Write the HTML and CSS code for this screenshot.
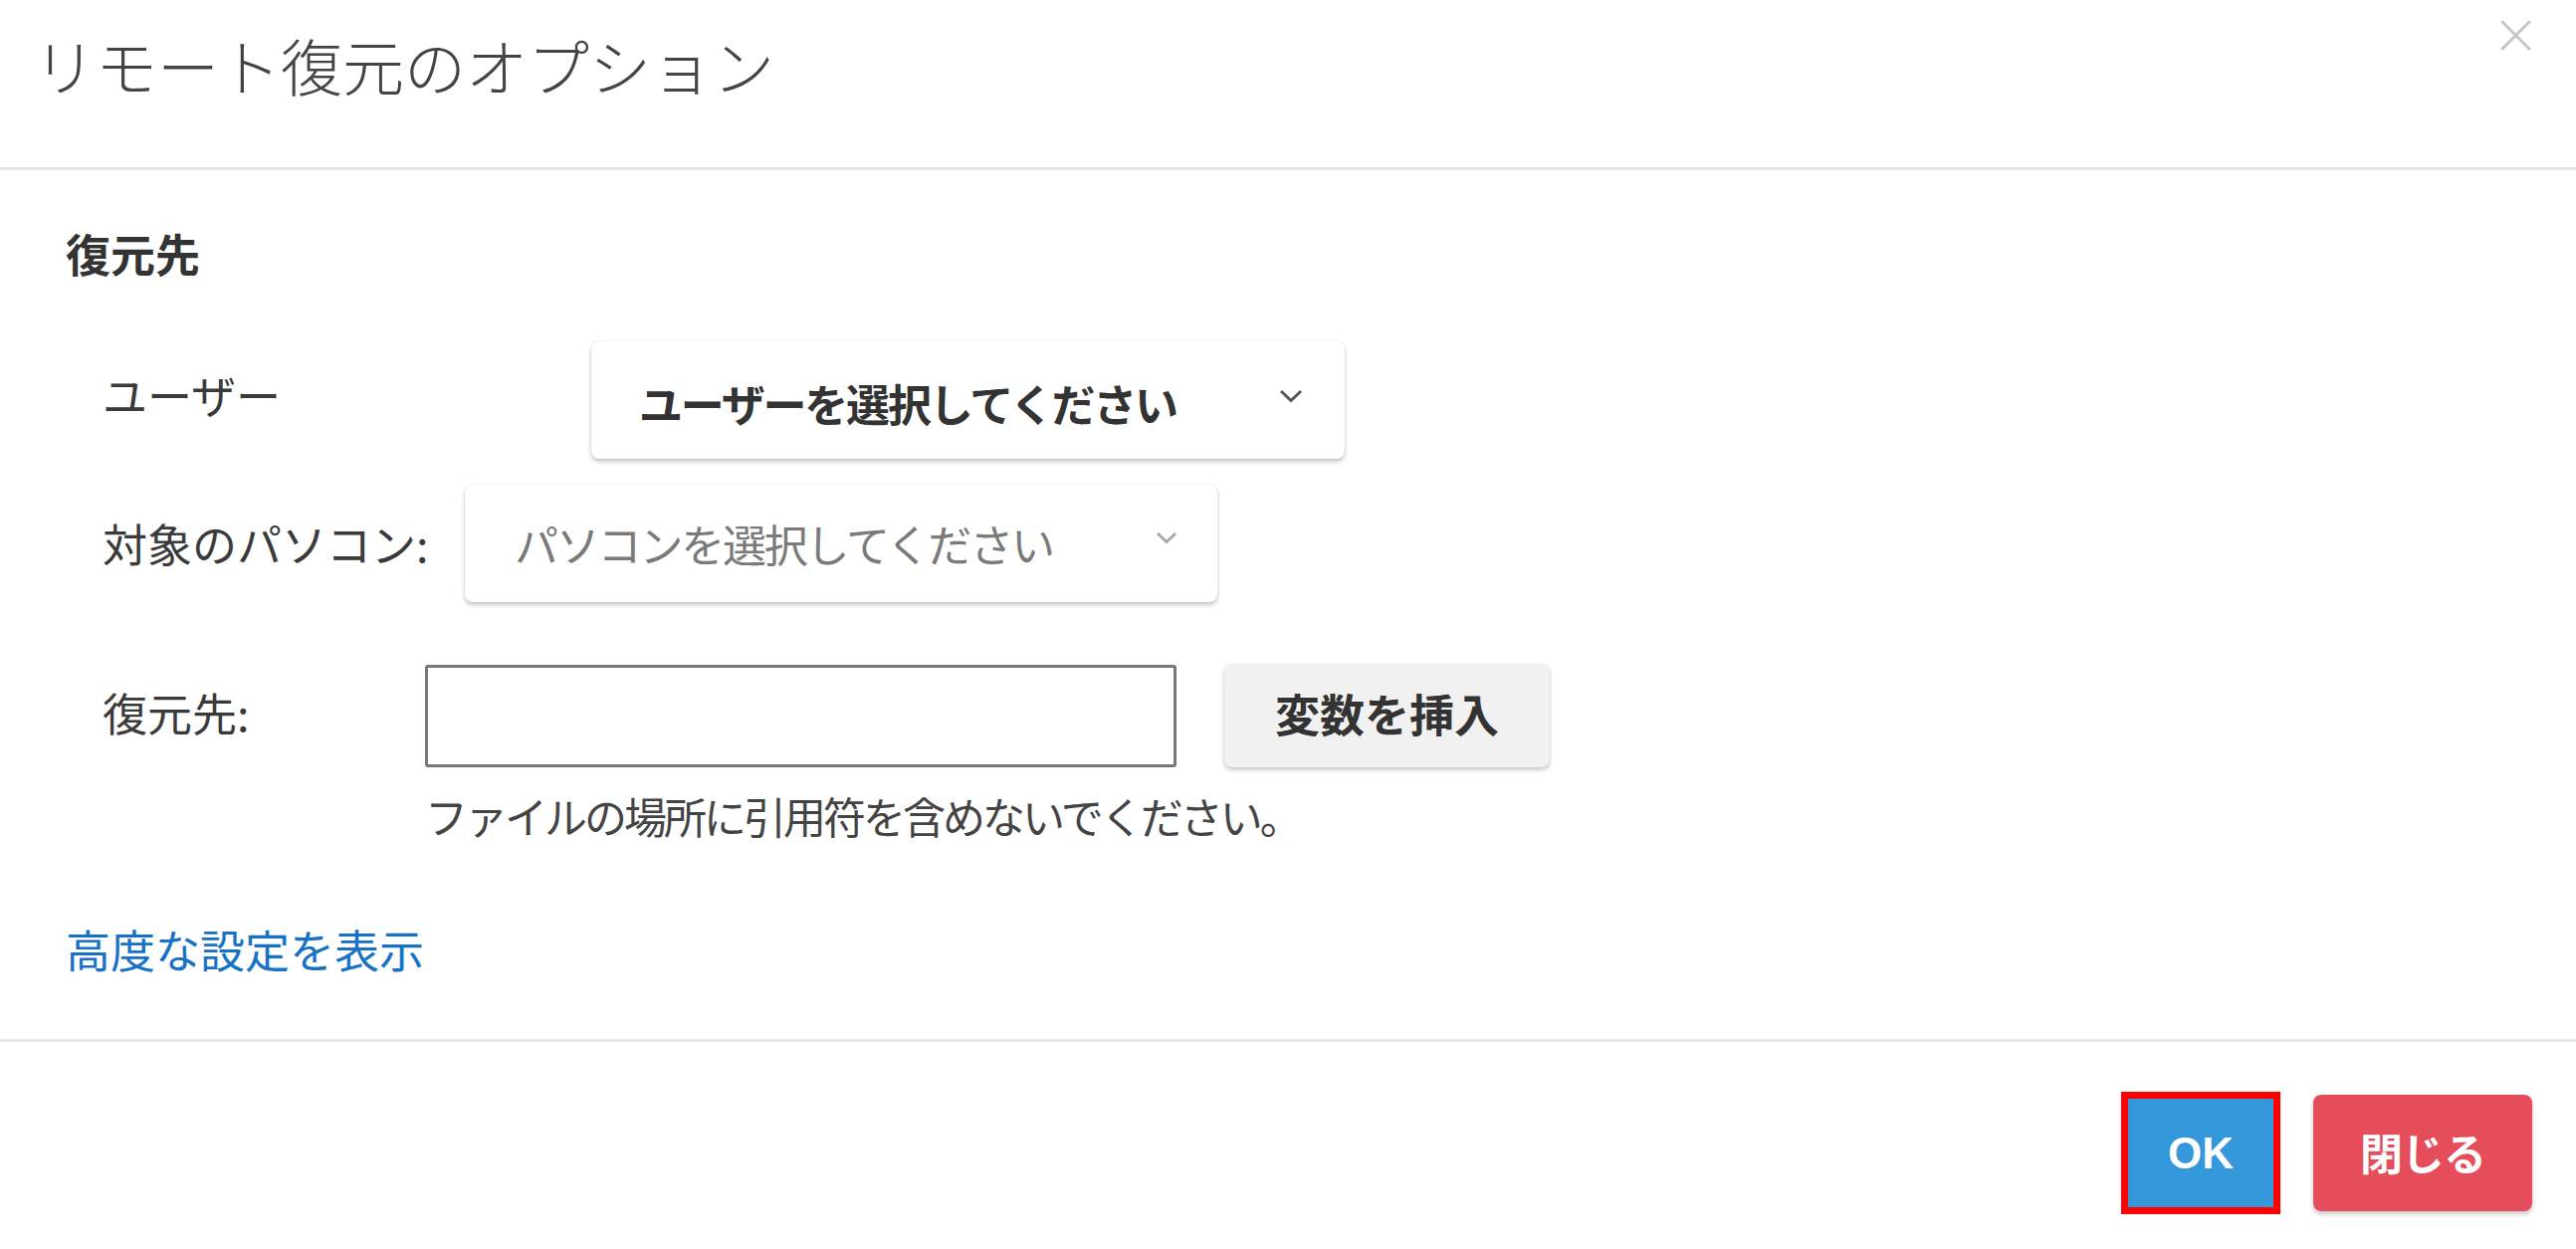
FILE: index.html
```html
<!DOCTYPE html>
<html lang="ja">
<head>
<meta charset="utf-8">
<title>リモート復元のオプション</title>
<link rel="stylesheet" href="styles.css">
</head>
<body>
<div class="modal">
  <div class="modal-header">
    <h4 class="modal-title">リモート復元のオプション</h4>
    <button class="close" type="button" aria-label="閉じる">
      <svg width="31" height="31" viewBox="0 0 31 31"><path d="M2 2 L29 29 M29 2 L2 29" stroke="#c6c6c6" stroke-width="3" fill="none" stroke-linecap="round"/></svg>
    </button>
  </div>
  <div class="modal-body">
    <div class="section-title">復元先</div>
    <div class="row">
      <label class="lbl lbl-user">ユーザー</label>
      <div class="select select-user">
        <span class="select-text">ユーザーを選択してください</span>
        <svg class="chev" width="24" height="14" viewBox="0 0 24 14"><polyline points="2,2 12,11.5 22,2" fill="none" stroke="#555" stroke-width="3"/></svg>
      </div>
    </div>
    <div class="row row-pc">
      <label class="lbl lbl-pc">対象のパソコン:</label>
      <div class="select select-pc">
        <span class="select-text disabled">パソコンを選択してください</span>
        <svg class="chev" width="22" height="13" viewBox="0 0 22 13"><polyline points="2,2 11,10.5 20,2" fill="none" stroke="#a8a8a8" stroke-width="3"/></svg>
      </div>
    </div>
    <div class="row row-dest">
      <label class="lbl lbl-dest">復元先:</label>
      <input class="path" type="text">
      <button class="btn-var" type="button">変数を挿入</button>
    </div>
    <div class="help">ファイルの場所に引用符を含めないでください。</div>
    <a class="adv" href="#">高度な設定を表示</a>
  </div>
  <div class="modal-footer">
    <button class="btn-ok" type="button">OK</button>
    <button class="btn-close" type="button">閉じる</button>
  </div>
</div>
</body>
</html>
```
FILE: styles.css
```css
* { box-sizing: border-box; }
html, body { margin: 0; padding: 0; background: #fff; }
body {
  width: 2588px;
  height: 1255px;
  overflow: hidden;
  font-family: "Noto Sans CJK JP", "Noto Sans", sans-serif;
  color: #333;
}
.modal { position: relative; width: 2588px; height: 1255px; }

.modal-header {
  height: 171px;
  padding: 28px 34px 0 34px;
  border-bottom: 3px solid #e5e5e5;
}
.modal-title {
  margin: 0;
  font-size: 62px;
  line-height: 74px;
  font-weight: 300;
  color: #444;
}
.close {
  position: absolute;
  top: 20px;
  right: 45px;
  width: 31px;
  height: 31px;
  padding: 0;
  border: 0;
  background: transparent;
  display: block;
}
.close svg { display: block; }

.modal-body {
  height: 873px;
  padding: 54px 0 0 66px;
}
.section-title {
  font-size: 45px;
  line-height: 60px;
  font-weight: 700;
  color: #333;
}
.row {
  display: flex;
  align-items: center;
  margin-top: 58px;
  margin-left: 37px;
}
.row-pc { margin-top: 26px; }
.row-dest { margin-top: 62px; }

.lbl {
  font-size: 45px;
  line-height: 60px;
  color: #3a3a3a;
  flex: none;
}
.lbl-user { width: 491px; padding-bottom: 10px; }
.lbl-pc { width: 364px; }
.lbl-dest { width: 324px; padding-bottom: 6px; }

.select {
  position: relative;
  height: 118px;
  border-radius: 8px;
  background: #fff;
  box-shadow: 0 0 2px rgba(0,0,0,0.10), 0 3px 4px rgba(0,0,0,0.22);
  display: flex;
  align-items: center;
  justify-content: space-between;
  padding: 0 42px 0 48px;
  flex: none;
}
.select-user { width: 757px; }
.select-pc { width: 756px; padding-right: 40px; padding-left: 50px; }
.select-text {
  font-size: 44px;
  line-height: 60px;
  letter-spacing: -2.2px;
  font-weight: 700;
  color: #333;
  padding-top: 6px;
}
.select-text.disabled {
  font-weight: 400;
  color: #7a7a7a;
  padding-top: 0;
}
.chev { display: block; flex: none; margin-top: -8px; }
.select-pc .chev { margin-top: -12px; }

.path {
  width: 755px;
  height: 103px;
  border: 3px solid #777;
  border-radius: 3px;
  background: #fff;
  margin: 0;
  padding: 0 12px;
  flex: none;
}
.btn-var {
  margin-left: 48px;
  width: 327px;
  height: 104px;
  border: 0;
  border-radius: 8px;
  background: #f1f1f1;
  box-shadow: 0 0 2px rgba(0,0,0,0.08), 0 3px 4px rgba(0,0,0,0.2);
  font-family: "Noto Sans CJK JP", "Noto Sans", sans-serif;
  font-size: 45px;
  line-height: 60px;
  font-weight: 700;
  color: #333;
  padding: 0 0 4px 0;
  flex: none;
}

.help {
  margin-top: 20px;
  margin-left: 361px;
  font-size: 43px;
  line-height: 56px;
  letter-spacing: -3px;
  color: #444;
}
.adv {
  display: block;
  width: max-content;
  margin-top: 77px;
  font-size: 45px;
  line-height: 60px;
  color: #1772c6;
  text-decoration: none;
}

.modal-footer {
  height: 211px;
  border-top: 3px solid #e5e5e5;
  padding: 53px 44px 0 0;
  display: flex;
  justify-content: flex-end;
  align-items: flex-start;
}
.modal-footer > * { flex: none; }
.btn-ok {
  margin-top: 4px;
  width: 146px;
  height: 109px;
  border: 0;
  border-radius: 0;
  background: #3598db;
  outline: 7px solid #ff0000;
  color: #fff;
  font-family: "Liberation Sans", Arial, sans-serif;
  font-weight: 700;
  font-size: 44px;
  padding: 0;
}
.btn-close {
  margin-left: 40px;
  width: 220px;
  height: 117px;
  border: 0;
  border-radius: 8px;
  background: #e64d5a;
  box-shadow: 0 3px 5px rgba(0,0,0,0.22);
  color: #fff;
  font-family: "Noto Sans CJK JP", "Noto Sans", sans-serif;
  font-weight: 700;
  font-size: 43px;
  letter-spacing: -1px;
  padding: 0 0 4px 0;
}
```
